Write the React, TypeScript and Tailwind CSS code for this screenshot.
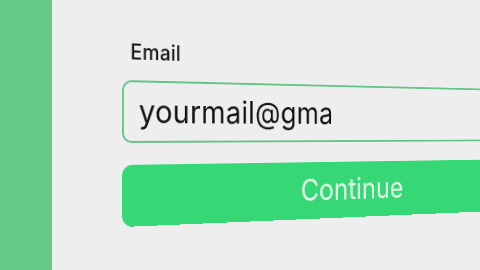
export default function App() {
  return (
    <div className="flex h-[270px] w-[480px] overflow-hidden bg-[#efeeee] font-['Inter',sans-serif]">
      {/* Sidebar */}
      <div className="h-full w-[52px] shrink-0 bg-[#66c886]" />

      {/* Form, seen at an angle */}
      <div className="flex-1 pl-[70px] pt-[38px]">
        <div className="w-[550px] origin-left transform-[perspective(800px)_rotateY(20deg)]">
          <label className="mb-[14px] ml-[9px] block text-[21px] font-medium leading-[28px] tracking-[0.3px] text-[#141414]">
            Email
          </label>
          <div className="flex h-[63px] items-center rounded-[10px] border-2 border-[#62c485] px-[16px]">
            <span className="text-[32px] text-[#121212] tracking-[0.4px]">yourmail@gma</span>
          </div>
          <button className="mt-[22px] flex h-[62px] w-full items-center justify-center rounded-[11px] bg-[#35d874] text-[32px] text-[#e9f8ee]">
            Continue
          </button>
        </div>
      </div>
    </div>
  );
}
